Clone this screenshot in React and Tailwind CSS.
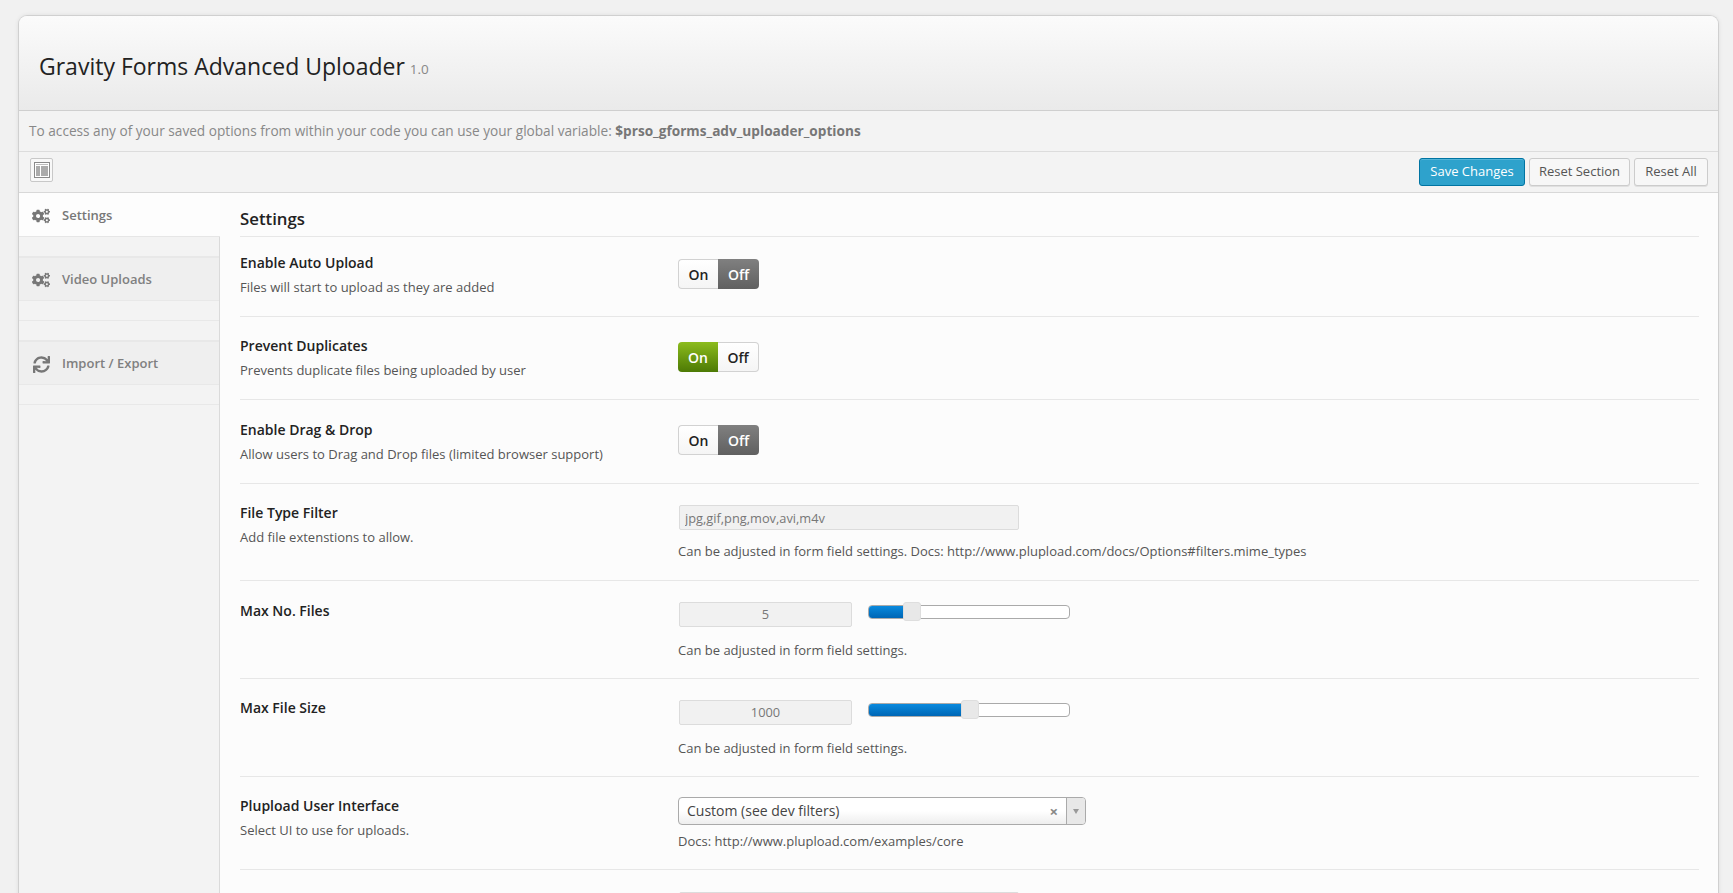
import React from 'react';
import { FaCogs, FaSync } from 'react-icons/fa';

const font = { fontFamily: '"Open Sans", sans-serif' };

const Toggle = ({ on }) => (
  <div className="flex h-[30px] w-[81px] text-[14px] font-semibold">
    <div
      className={
        on
          ? 'flex w-[40px] items-center justify-center rounded-l-[4px] bg-gradient-to-b from-[#8cbc1d] to-[#4d7a05] text-white'
          : 'flex w-[40px] items-center justify-center rounded-l-[4px] border border-r-0 border-[#d2d2d2] bg-gradient-to-b from-white to-[#f5f5f5] text-[#222]'
      }
    >
      On
    </div>
    <div
      className={
        on
          ? 'flex flex-1 items-center justify-center rounded-r-[4px] border border-l-0 border-[#d2d2d2] bg-gradient-to-b from-white to-[#f5f5f5] text-[#222]'
          : 'flex flex-1 items-center justify-center rounded-r-[4px] bg-gradient-to-b from-[#808080] to-[#606060] text-white'
      }
    >
      Off
    </div>
  </div>
);

const Field = ({ value, wide }) => (
  <input
    readOnly
    value={value}
    className={
      wide
        ? 'ml-[1px] block h-[25px] w-[340px] rounded-[2px] border border-[#dcdcdc] bg-[#f1f1f1] px-[5px] text-[12.8px] text-[#777] outline-none'
        : 'ml-[1px] block h-[25px] w-[173px] rounded-[2px] border border-[#dcdcdc] bg-[#f1f1f1] pb-[2px] text-center text-[12.8px] text-[#777] outline-none'
    }
  />
);

const Slider = ({ fill, handle }) => (
  <div className="relative mt-[3px] h-[14px] w-[202px] rounded-[4px] border border-[#aaa] bg-white">
    <div
      className="h-full rounded-l-[3px] bg-gradient-to-b from-[#0a8ade] to-[#0066b5]"
      style={{ width: fill }}
    />
    <div
      className="absolute top-[-4px] h-[19px] w-[18px] rounded-[3px] border border-[#dedede] bg-[#e8e8e8]"
      style={{ left: handle }}
    />
  </div>
);

const Note = ({ children, className }) => (
  <p className={`text-[13px] leading-[18px] text-[#555] ${className}`}>{children}</p>
);

const Row = ({ title, desc, height, pad, rpad, children }) => (
  <div className={`flex border-b border-[#e7e7e7] ${height}`}>
    <div className={`w-[438px] ${pad}`}>
      <div className="text-[14px] font-semibold leading-[20px] text-[#222]">{title}</div>
      {desc && <div className="mt-[6px] text-[13px] leading-[17px] text-[#555]">{desc}</div>}
    </div>
    <div className={rpad}>{children}</div>
  </div>
);

const SideItem = ({ icon, label, active }) => (
  <div
    className={
      active
        ? 'mr-[-1px] flex h-[44px] items-center gap-[6px] border-b border-[#e6e6e6] bg-[#fdfdfd] pl-[13px] pt-[2px] text-[13px] font-semibold text-[#777]'
        : 'flex h-[44px] items-center gap-[6px] border-t border-b border-[#e8e8e8] bg-[#efefef] pl-[13px] pt-[2px] text-[13px] font-semibold text-[#808080]'
    }
  >
    <span className="flex w-[18px] justify-center text-[#777]">{icon}</span>
    <span className="ml-[6px]">{label}</span>
  </div>
);

const Gap = () => <div className="h-[20px] border-b border-[#e8e8e8]" />;

export default function App() {
  return (
    <div className="h-screen overflow-hidden bg-[#f1f1f1] pl-[18px] pr-[14px] pt-[15px]" style={font}>
      <div className="rounded-t-[9px] border border-b-0 border-[#d0d0d0] shadow-[0_0_4px_rgba(0,0,0,0.08)]">
        <div className="flex h-[95px] items-center rounded-t-[8px] border-b border-[#cfcfcf] bg-gradient-to-b from-[#fbfbfb] to-[#eaeaea] pl-[20px] pt-[6px]">
          <h1 className="text-[23px] text-[#222]">Gravity Forms Advanced Uploader</h1>
          <span className="ml-[5px] mt-[6px] text-[13.5px] text-[#888]">1.0</span>
        </div>

        <div className="flex h-[41px] items-center border-b border-[#dcdcdc] bg-[#f3f3f3] pl-[10px] pt-[1px] text-[13.65px] text-[#888]">
          <span>
            To access any of your saved options from within your code you can use your global variable:{' '}
            <b className="font-bold text-[#777]">$prso_gforms_adv_uploader_options</b>
          </span>
        </div>

        <div className="flex h-[41px] items-start justify-between border-b border-[#d8d8d8] bg-[#f3f3f3] pl-[11px] pr-[10px] pt-[6px]">
          <div className="flex h-[24px] w-[23px] items-center justify-center rounded-[2px] border border-[#c8c8c8] bg-[#f8f8f8]">
            <svg width="16" height="16" viewBox="0 0 16 16">
              <rect x="0.5" y="0.5" width="15" height="15" fill="#fff" stroke="#8a8a8a" />
              <rect x="2" y="2" width="12" height="1" fill="#bdbdbd" />
              <rect x="2" y="4" width="4" height="10" fill="#ababab" />
              <rect x="7" y="4" width="7" height="10" fill="#ababab" />
            </svg>
          </div>
          <div className="flex gap-[4px] text-[13px]">
            <button className="h-[28px] w-[106px] rounded-[3px] border border-[#0074a2] bg-[#2ea2cc] text-white shadow-[inset_0_1px_0_rgba(120,200,230,0.5)]">
              Save Changes
            </button>
            <button className="h-[28px] w-[101px] rounded-[3px] border border-[#cccccc] bg-[#f7f7f7] text-[#555] shadow-[0_1px_0_rgba(0,0,0,0.08)]">
              Reset Section
            </button>
            <button className="h-[28px] w-[74px] rounded-[3px] border border-[#cccccc] bg-[#f7f7f7] text-[#555] shadow-[0_1px_0_rgba(0,0,0,0.08)]">
              Reset All
            </button>
          </div>
        </div>

        <div className="flex bg-[#fcfcfc]">
          <div className="h-[720px] w-[201px] shrink-0 border-r border-[#dadada] bg-[#f3f3f3]">
            <SideItem active icon={<FaCogs size={18} />} label="Settings" />
            <Gap />
            <SideItem icon={<FaCogs size={18} />} label="Video Uploads" />
            <Gap />
            <Gap />
            <SideItem icon={<FaSync size={17} />} label="Import / Export" />
            <Gap />
          </div>

          <div className="flex-1 pl-[20px] pr-[19px]">
            <h2 className="flex h-[44px] items-center border-b border-[#e7e7e7] pt-[8px] text-[16.8px] font-semibold text-[#222]">
              Settings
            </h2>

            <Row
              title="Enable Auto Upload"
              desc="Files will start to upload as they are added"
              height="h-[80px]"
              pad="pt-[16px]"
              rpad="pt-[22px]"
            >
              <Toggle />
            </Row>
            <Row
              title="Prevent Duplicates"
              desc="Prevents duplicate files being uploaded by user"
              height="h-[83px]"
              pad="pt-[19px]"
              rpad="pt-[25px]"
            >
              <Toggle on />
            </Row>
            <Row
              title="Enable Drag &amp; Drop"
              desc="Allow users to Drag and Drop files (limited browser support)"
              height="h-[84px]"
              pad="pt-[20px]"
              rpad="pt-[25px]"
            >
              <Toggle />
            </Row>
            <Row
              title="File Type Filter"
              desc="Add file extenstions to allow."
              height="h-[97px]"
              pad="pt-[19px]"
              rpad="pt-[21px]"
            >
              <Field wide value="jpg,gif,png,mov,avi,m4v" />
              <Note className="mt-[12px]">
                Can be adjusted in form field settings. Docs: http://www.plupload.com/docs/Options#filters.mime_types
              </Note>
            </Row>
            <Row title="Max No. Files" height="h-[98px]" pad="pt-[20px]" rpad="pt-[21px]">
              <div className="flex items-start gap-[16px]">
                <Field value="5" />
                <Slider fill={35} handle={34} />
              </div>
              <Note className="mt-[14px]">Can be adjusted in form field settings.</Note>
            </Row>
            <Row title="Max File Size" height="h-[98px]" pad="pt-[19px]" rpad="pt-[21px]">
              <div className="flex items-start gap-[16px]">
                <Field value="1000" />
                <Slider fill={93} handle={92} />
              </div>
              <Note className="mt-[14px]">Can be adjusted in form field settings.</Note>
            </Row>
            <Row
              title="Plupload User Interface"
              desc="Select UI to use for uploads."
              height="h-[93px]"
              pad="pt-[19px]"
              rpad="pt-[20px]"
            >
              <div className="flex h-[28px] w-[408px] items-center rounded-[4px] border border-[#aaa] bg-gradient-to-b from-white from-50% to-[#eeeeee] pl-[8px] text-[14px] text-[#444]">
                <span className="flex-1 pb-[2px]">Custom (see dev filters)</span>
                <span className="mr-[8px] text-[15px] font-bold leading-none text-[#888]">×</span>
                <span className="flex h-full w-[19px] items-center justify-center rounded-r-[3px] border-l border-[#aaa] bg-[#e8e8e8]">
                  <span className="h-0 w-0 border-x-[3.5px] border-t-[5px] border-x-transparent border-t-[#999]" />
                </span>
              </div>
              <Note className="mt-[7px]">Docs: http://www.plupload.com/examples/core</Note>
            </Row>
            <div className="pl-[438px] pt-[22px]">
              <Field wide value="" />
            </div>
          </div>
        </div>
      </div>
    </div>
  );
}
